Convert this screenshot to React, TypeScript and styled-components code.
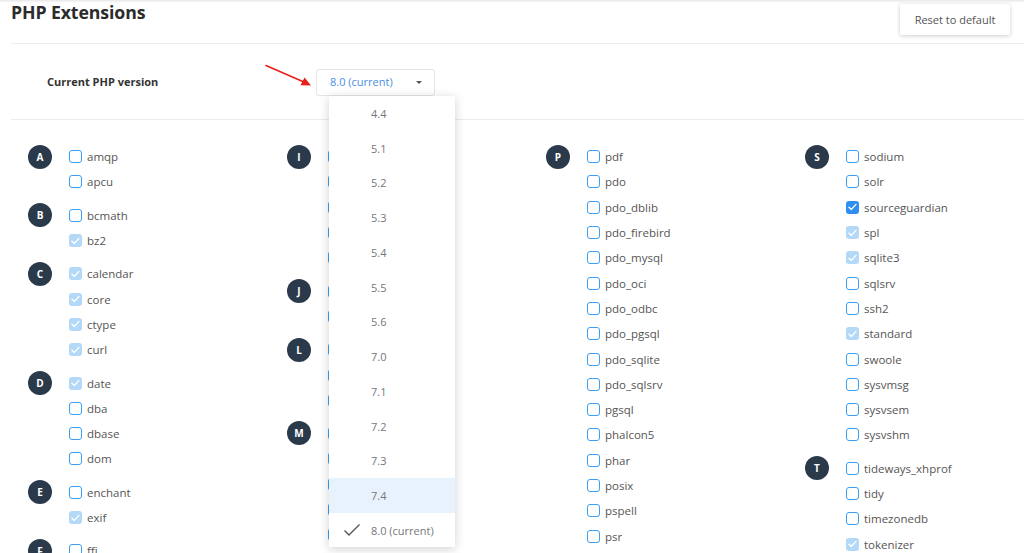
import React from "react";
import styled, { createGlobalStyle } from "styled-components";

const Global = createGlobalStyle`
  html, body { margin: 0; padding: 0; background: #fff; overflow: hidden; }
  body { font-family: "Open Sans", "Liberation Sans", sans-serif; width: 1024px; height: 553px; }
  * { box-sizing: border-box; }
`;

const Page = styled.div`
  position: relative;
  width: 1024px;
  height: 553px;
  overflow: hidden;
  padding-left: 11px;
  box-shadow: inset 0 3px 3px -2px rgba(0,0,0,0.12);
`;

const Header = styled.div`
  display: flex;
  justify-content: space-between;
  align-items: flex-start;
  height: 44px;
  border-bottom: 1px solid #ececec;
  padding-right: 14px;
`;

const Title = styled.h1`
  margin: 0;
  font-size: 17.7px;
  font-weight: 700;
  color: #2b2b2b;
  line-height: 24px;
  letter-spacing: -0.1px;
`;

const ResetButton = styled.button`
  margin-top: 4px;
  width: 110px;
  height: 31px;
  border: none;
  border-radius: 2px;
  background: #fff;
  box-shadow: 0 1px 4px rgba(0,0,0,0.2);
  font-family: inherit;
  font-size: 11px;
  color: #555;
  cursor: pointer;
`;

const VersionRow = styled.div`
  position: relative;
  display: flex;
  align-items: center;
  height: 76px;
  padding-left: 36px;
  border-bottom: 1px solid #ececec;
`;

const VersionLabel = styled.div`
  width: 269px;
  font-size: 11px;
  font-weight: 700;
  color: #333;
  margin-top: -1px;
`;

const SelectWrap = styled.div`
  position: relative;
  z-index: 5;
`;

const SelectBox = styled.div`
  display: flex;
  align-items: center;
  justify-content: space-between;
  width: 119px;
  height: 27px;
  padding: 0 12px 0 13px;
  border: 1px solid #e2e5ea;
  border-radius: 3px;
  background: #fff;
  font-size: 11px;
  color: #4a90e2;
  margin-top: 1px;
  line-height: 24px;
`;

const Caret = styled.span`
  width: 0;
  height: 0;
  border-left: 3px solid transparent;
  border-right: 3px solid transparent;
  border-top: 3px solid #555;
`;

const Menu = styled.ul`
  position: absolute;
  left: 13px;
  top: 28px;
  width: 126px;
  margin: 0;
  padding: 0;
  list-style: none;
  background: #fff;
  box-shadow: 0 2px 10px rgba(0,0,0,0.18);
`;

const MenuItem = styled.li<{ $active?: boolean }>`
  position: relative;
  height: 34.75px;
  display: flex;
  align-items: center;
  padding-left: 42px;
  padding-top: 1px;
  font-size: 11px;
  color: #777;
  background: ${(p) => (p.$active ? "#e8f2fd" : "#fff")};
`;

const Check = styled.svg`
  position: absolute;
  left: 14px;
  top: 50%;
  transform: translateY(-50%);
`;

const Arrow = styled.svg`
  position: absolute;
  left: 252px;
  top: 20px;
`;

const Grid = styled.div`
  display: grid;
  grid-template-columns: repeat(4, 259px);
  padding-left: 17px;
  padding-top: 24px;
`;

const Column = styled.div`
  display: flex;
  flex-direction: column;
  gap: 8px;
`;

const Group = styled.div`
  display: flex;
  align-items: flex-start;
`;

const Letter = styled.div`
  width: 24px;
  height: 24px;
  margin-top: 0.5px;
  border-radius: 50%;
  background: #2a3a4b;
  color: #fff;
  font-size: 10px;
  font-weight: 700;
  display: flex;
  align-items: center;
  justify-content: center;
  flex-shrink: 0;
`;

const Items = styled.div`
  display: flex;
  flex-direction: column;
  margin-left: 17px;
`;

const Row = styled.label`
  display: flex;
  align-items: center;
  height: 25.3px;
  font-size: 11.5px;
  color: #555;
  white-space: nowrap;
`;

const Box = styled.span<{ $state: "off" | "on" | "dis" }>`
  width: 13px;
  height: 13px;
  border-radius: 3px;
  margin-right: 5px;
  display: inline-flex;
  align-items: center;
  justify-content: center;
  flex-shrink: 0;
  border: ${(p) => (p.$state === "off" ? "1.6px solid #3a9ff5" : "none")};
  background: ${(p) =>
    p.$state === "on" ? "#2f8ef0" : p.$state === "dis" ? "#b4d8f8" : "#fff"};
`;

type S = "off" | "on" | "dis";
type Grp = { letter: string; items: [string, S][] };

const columns: Grp[][] = [
  [
    { letter: "A", items: [["amqp", "off"], ["apcu", "off"]] },
    { letter: "B", items: [["bcmath", "off"], ["bz2", "dis"]] },
    { letter: "C", items: [["calendar", "dis"], ["core", "dis"], ["ctype", "dis"], ["curl", "dis"]] },
    { letter: "D", items: [["date", "dis"], ["dba", "off"], ["dbase", "off"], ["dom", "off"]] },
    { letter: "E", items: [["enchant", "off"], ["exif", "dis"]] },
    { letter: "F", items: [["ffi", "off"], ["fileinfo", "dis"]] },
  ],
  [
    { letter: "I", items: [["imagick", "off"], ["imap", "off"], ["inotify", "off"], ["interbase", "off"], ["intl", "off"]] },
    { letter: "J", items: [["json", "off"], ["jsmin", "off"]] },
    { letter: "L", items: [["ldap", "off"], ["leveldb", "off"], ["lzf", "off"]] },
    { letter: "M", items: [["mailparse", "off"], ["mbstring", "off"], ["memcache", "off"], ["memcached", "off"], ["mongodb", "off"], ["msgpack", "off"]] },
  ],
  [
    {
      letter: "P",
      items: [
        ["pdf", "off"], ["pdo", "off"], ["pdo_dblib", "off"], ["pdo_firebird", "off"],
        ["pdo_mysql", "off"], ["pdo_oci", "off"], ["pdo_odbc", "off"], ["pdo_pgsql", "off"],
        ["pdo_sqlite", "off"], ["pdo_sqlsrv", "off"], ["pgsql", "off"], ["phalcon5", "off"],
        ["phar", "off"], ["posix", "off"], ["pspell", "off"], ["psr", "off"],
      ],
    },
  ],
  [
    {
      letter: "S",
      items: [
        ["sodium", "off"], ["solr", "off"], ["sourceguardian", "on"], ["spl", "dis"],
        ["sqlite3", "dis"], ["sqlsrv", "off"], ["ssh2", "off"], ["standard", "dis"],
        ["swoole", "off"], ["sysvmsg", "off"], ["sysvsem", "off"], ["sysvshm", "off"],
      ],
    },
    { letter: "T", items: [["tideways_xhprof", "off"], ["tidy", "off"], ["timezonedb", "off"], ["tokenizer", "dis"]] },
  ],
];

const versions = ["4.4", "5.1", "5.2", "5.3", "5.4", "5.5", "5.6", "7.0", "7.1", "7.2", "7.3", "7.4", "8.0 (current)"];

const Tick = ({ color }: { color: string }) => (
  <svg width="9" height="8" viewBox="0 0 9 8">
    <path d="M1 4.2 L3.4 6.4 L8 1.4" fill="none" stroke={color} strokeWidth="1.4" strokeLinecap="round" strokeLinejoin="round" />
  </svg>
);

export default function App() {
  return (
    <>
      <Global />
      <Page>
        <Header>
          <Title>PHP Extensions</Title>
          <ResetButton>Reset to default</ResetButton>
        </Header>
        <VersionRow>
          <VersionLabel>Current PHP version</VersionLabel>
          <Arrow width="52" height="26" viewBox="0 0 52 26">
            <line x1="3" y1="1.5" x2="42" y2="18.5" stroke="#e8201c" strokeWidth="1.6" strokeLinecap="round" />
            <path d="M48 21.5 L37.5 21.3 L41.5 13.5 Z" fill="#e8201c" />
          </Arrow>
          <SelectWrap>
            <SelectBox>
              <span>8.0 (current)</span>
              <Caret />
            </SelectBox>
            <Menu>
              {versions.map((v) => (
                <MenuItem key={v} $active={v === "7.4"}>
                  {v.startsWith("8.0") && (
                    <Check width="18" height="14" viewBox="0 0 18 14">
                      <path d="M1.5 7.5 L6 12 L16.5 1.5" fill="none" stroke="#555" strokeWidth="1.4" />
                    </Check>
                  )}
                  {v}
                </MenuItem>
              ))}
            </Menu>
          </SelectWrap>
        </VersionRow>
        <Grid>
          {columns.map((col, ci) => (
            <Column key={ci}>
              {col.map((g) => (
                <Group key={g.letter}>
                  <Letter>{g.letter}</Letter>
                  <Items>
                    {g.items.map(([name, st]) => (
                      <Row key={name}>
                        <Box $state={st}>{st !== "off" && <Tick color="#fff" />}</Box>
                        {name}
                      </Row>
                    ))}
                  </Items>
                </Group>
              ))}
            </Column>
          ))}
        </Grid>
      </Page>
    </>
  );
}
